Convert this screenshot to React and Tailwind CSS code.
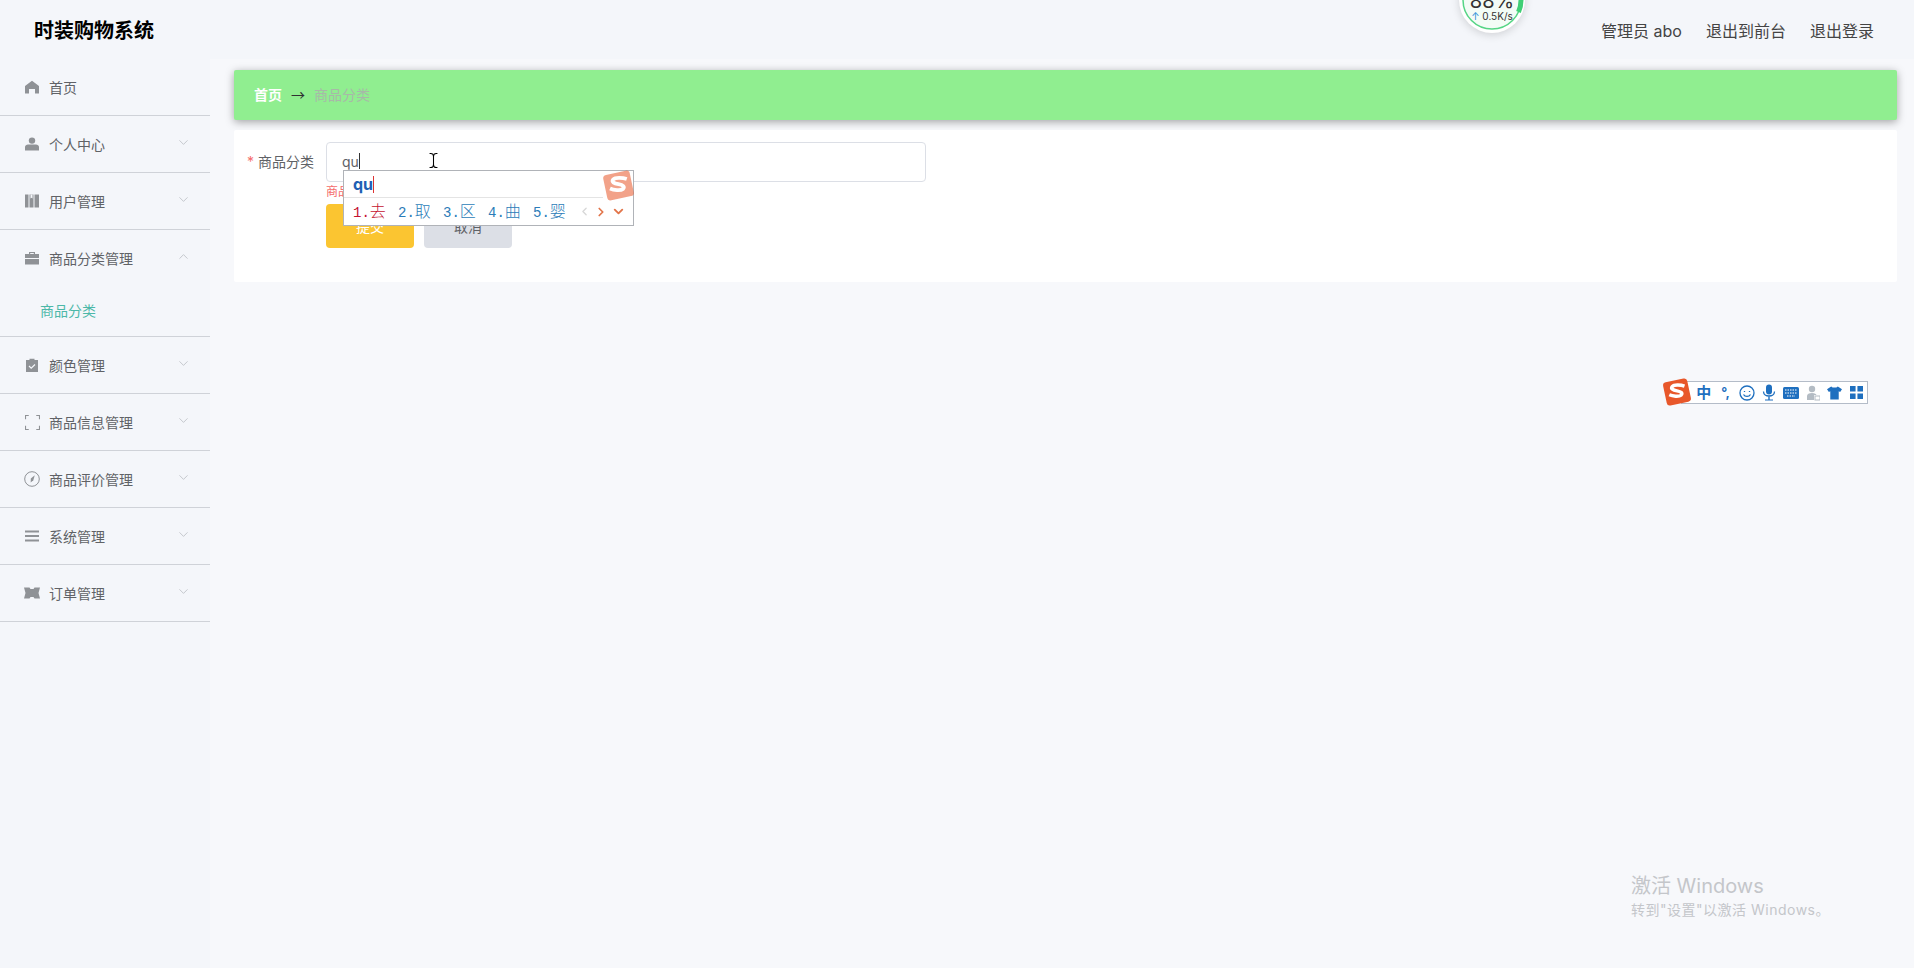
import { ChevronDown, ChevronUp, ChevronLeft, ChevronRight, TextCursor } from "lucide-react";

const font = "font-['Inter','Noto_Sans_CJK_SC',sans-serif]";

const HomeIcon = () => (
    <svg viewBox="0 0 14 14" className="w-[14px] h-[14px]" fill="#8f9296">
        <path d="M7 .8 14 6v7.500h-4V9H4v4.500H0V6z" />
    </svg>
);
const UserIcon = () => (
    <svg viewBox="0 0 14 14" className="w-[14px] h-[14px]" fill="#8f9296">
        <circle cx="7" cy="3.600" r="3.200" />
        <path d="M0 13.500V10c0-1.500 1.500-2.500 3-2.500h8c1.500 0 3 1 3 2.500v3.500z" />
    </svg>
);
const BookIcon = () => (
    <svg viewBox="0 0 14 14" className="w-[14px] h-[14px]" fill="#8f9296">
        <path d="M0 .5h3.500v13H0zM4.500 .5h4v13h-4zM9.500 .5h4.500v13H9.500z" />
        <path d="M5.500 .5h2v4l-1-.8-1 .8z" fill="#f5f7fb" />
    </svg>
);
const CaseIcon = () => (
    <svg viewBox="0 0 14 14" className="w-[14px] h-[14px]" fill="#8f9296">
        <path d="M4 3V1h6v2h4v4H0V3zm1.200 0h3.600V2.100H5.200z" />
        <path d="M0 8h14v5.500H0z" />
    </svg>
);
const ClipIcon = () => (
    <svg viewBox="0 0 14 14" className="w-[14px] h-[14px]">
        <path d="M1 2h3.500V.8h5V2H13v12H1z" fill="#8f9296" />
        <path d="m4 8 2.200 2.200L10 6.500" fill="none" stroke="#f5f7fb" strokeWidth="1.200" />
    </svg>
);
const ScanIcon = () => (
    <svg viewBox="0 0 14 14" className="w-[15px] h-[15px]" fill="none" stroke="#8f9296" strokeWidth="1">
        <path d="M.5 4V.5h3M10.500 .5h3V4M.5 10v3.500h3M10.500 13.500h3V10" />
    </svg>
);
const CompassIcon = () => (
    <svg viewBox="0 0 16 16" className="w-[16px] h-[16px]">
        <circle cx="8" cy="8" r="7.300" fill="none" stroke="#8f9296" strokeWidth="1" />
        <path d="M10.800 4.200 9.300 9.300 6.700 11.500 6.800 7.500z" fill="#8f9296" />
    </svg>
);
const MenuIcon = () => (
    <svg viewBox="0 0 14 12" className="w-[14px] h-[12px]" fill="#8f9296">
        <path d="M0 .5h14v2H0zM0 5h14v2H0zM0 9.500h14v2H0z" />
    </svg>
);
const TicketIcon = () => (
    <svg viewBox="0 0 16 12" className="w-[16px] h-[12px]" fill="#8f9296">
        <path d="M0 .5h5.500l1 1.500h3l1-1.500H16l-1.500 5.500 1.500 5.500h-5.500l-1-1.500h-3l-1 1.500H0l1.500-5.500z" />
    </svg>
);

const SogouLogo = ({ className }) => (
    <svg viewBox="0 0 28 28" className={className}>
        <rect x="2.500" y="3" width="23" height="22" rx="3" fill="#e8572a" transform="rotate(-12 14 14)" />
        <path d="M21 8.500c-3-1-9.500-1.800-11.500.4-1.500 2 .5 3.300 4.500 4 4 .7 5.500 2.200 3.800 4.100-2 1.600-7.800 1-11-.4" fill="none" stroke="#fff" strokeWidth="3.200" />
    </svg>
);

const menu = [
    { label: "首页", icon: <HomeIcon /> },
    { label: "个人中心", icon: <UserIcon />, arrow: true },
    { label: "用户管理", icon: <BookIcon />, arrow: true },
    { label: "商品分类管理", icon: <CaseIcon />, arrow: true, open: true, sub: "商品分类" },
    { label: "颜色管理", icon: <ClipIcon />, arrow: true },
    { label: "商品信息管理", icon: <ScanIcon />, arrow: true },
    { label: "商品评价管理", icon: <CompassIcon />, arrow: true },
    { label: "系统管理", icon: <MenuIcon />, arrow: true },
    { label: "订单管理", icon: <TicketIcon />, arrow: true },
];

const candidates = ["去", "取", "区", "曲", "婴"];

export default function App() {
    return (
        <div className={`relative w-[1914px] h-[968px] overflow-hidden bg-[#f7f8fb] ${font}`}>
            {/* --- Header --- */}
            <header className="flex items-center justify-between h-[59px] pt-[3px] bg-[#f4f6fa] pl-[34px] pr-[40px]">
                <h1 className="text-[20px] font-bold text-black">时装购物系统</h1>
                <div className="flex gap-[24px] text-[16px] text-[#444]">
                    <span>管理员 abo</span>
                    <span>退出到前台</span>
                    <span>退出登录</span>
                </div>
            </header>

            <div className="flex">
                {/* --- Sidebar --- */}
                <aside className="w-[210px] h-[909px] shrink-0 bg-[#f4f6fa] text-[14px] text-[#606266]">
                    {menu.map((m) => (
                        <div key={m.label} className="border-b border-[#cfd2d8]">
                            <div className="flex items-center h-[56px] pl-[24px] pr-[19px]">
                                <span className="flex items-center justify-center w-[16px] mr-[9px]">{m.icon}</span>
                                <span className="flex-1">{m.label}</span>
                                {m.arrow && (m.open
                                    ? <ChevronUp size={15} strokeWidth={1} className="text-[#a8abb2] -mt-[4px]" />
                                    : <ChevronDown size={15} strokeWidth={1} className="text-[#a8abb2] -mt-[4px]" />)}
                            </div>
                            {m.sub && (
                                <div className="flex items-center h-[50px] pb-[2px] pl-[40px] text-[#4cb8a8]">{m.sub}</div>
                            )}
                        </div>
                    ))}
                </aside>

                {/* --- Main --- */}
                <main className="flex-1 pl-[24px] pr-[17px] pt-[11px]">
                    <div className="flex items-center h-[50px] pb-[2px] px-[20px] rounded-[2px] bg-[#90ee90] text-[14px] shadow-[0_2px_8px_rgba(0,0,0,0.35)]">
                        <span className="font-bold text-white">首页</span>
                        <span className="mx-[9px] text-[#303133] text-[14px] leading-none font-['Noto_Sans_CJK_SC']">→</span>
                        <span className="text-[#a8b8a8]">商品分类</span>
                    </div>

                    <div className="mt-[10px] h-[152px] bg-white rounded-[2px] pt-[12px] text-[14px]">
                        <div className="flex">
                            <label className="flex items-center justify-end w-[80px] h-[40px] pb-[2px] text-[#606266]">
                                <span className="text-[#f56c6c] mr-[4px]">*</span>商品分类
                            </label>
                            <div className="ml-[13px] w-[600px] -translate-x-[1px]">
                                <div className="flex items-center h-[40px] pb-[2px] px-[15px] border border-[#dcdfe6] rounded-[4px] text-[#606266]">
                                    qu<span className="w-px h-[16px] bg-[#333]" />
                                </div>
                                <p className="mt-[2px] text-[12px] leading-[16px] text-[#f56c6c]">商品分类不能为空</p>
                                <div className="flex gap-[10px] mt-[4px]">
                                    <button className="w-[88px] h-[44px] rounded-[4px] bg-[#fbc531] text-white">提交</button>
                                    <button className="w-[88px] h-[44px] rounded-[4px] bg-[#dcdfe6] text-[#606266]">取消</button>
                                </div>
                            </div>
                        </div>
                    </div>
                </main>
            </div>

            {/* --- Network speed ball, cut off by the top of the window --- */}
            <div className="absolute left-[1459px] -top-[33px] flex flex-col items-center justify-end w-[66px] h-[66px] pb-[11px] rounded-full bg-white shadow-[0_2px_8px_rgba(0,0,0,0.15)]">
                <svg viewBox="0 0 66 66" className="absolute inset-0 w-[66px] h-[66px]">
                    <circle cx="33" cy="33" r="29" fill="#f3fcf6" stroke="#55d585" strokeWidth="1.500" />
                    <path d="M62 33a29 29 0 0 1-2.500 12" fill="none" stroke="#3fcf75" strokeWidth="5" />
                </svg>
                <span className="relative text-[20px] leading-[20px] -mb-[1px] text-[#333]">88%</span>
                <span className="relative text-[10px] leading-[12px] text-[#333]"><span className="text-[#2f8fd8]">↑</span> 0.5K/s</span>
            </div>

            {/* --- Mouse cursor --- */}
            <TextCursor size={17} strokeWidth={1.500} className="absolute left-[425px] top-[152px] text-black" />

            {/* --- IME candidate popup --- */}
            <div className="absolute left-[343px] top-[170px] w-[291px] h-[56px] bg-white border border-[#b0b3b8]">
                <div className="flex items-center h-[27px] pl-[9px] mr-[30px] border-b border-[#e4e4e4] text-[16px] font-bold text-[#1f5fb4]">
                    qu<span className="w-px h-[17px] bg-[#d33]" />
                </div>
                <div className="flex items-center h-[27px] pl-[9px] text-[16px] font-light">
                    {candidates.map((c, i) => (
                        <span key={c} className={`w-[45px] whitespace-nowrap ${i === 0 ? "text-[#c4122f]" : "text-[#2b7cb8]"}`}>
                            <span className="font-['Liberation_Mono'] text-[14px]">{i + 1}.</span>{c}
                        </span>
                    ))}
                    <ChevronLeft size={13} strokeWidth={2.500} className="text-[#d8d8d8]" />
                    <ChevronRight size={14} strokeWidth={3} className="ml-[3px] text-[#e2754a]" />
                    <ChevronDown size={15} strokeWidth={3} className="ml-[3px] text-[#e2754a]" />
                </div>
                <SogouLogo className="absolute -right-[2px] -top-[2px] w-[33px] h-[33px] opacity-55" />
            </div>

            {/* --- IME status bar --- */}
            <div className="absolute left-[1663px] top-[381px]">
                <div className="flex items-center ml-[18px] w-[187px] h-[23px] pl-[11px] bg-white border border-[#b4bcc8] text-[#1e6fbf] *:flex *:items-center *:justify-center *:w-[22px]">
                    <span className="text-[15px] font-bold leading-none">中</span>
                    <span className="text-[13px] font-bold leading-none">°,</span>
                    <span>
                        <svg viewBox="0 0 16 16" className="w-[16px] h-[16px]" fill="none" stroke="#1e6fbf" strokeWidth="1.300">
                            <circle cx="8" cy="8" r="7" />
                            <path d="M4.500 9.500c1.500 2.500 5.500 2.500 7 0M5.500 6v1M10.500 6v1" />
                        </svg>
                    </span>
                    <span>
                        <svg viewBox="0 0 14 16" className="w-[14px] h-[17px]" fill="#1e6fbf">
                            <rect x="4" y="0" width="6" height="10" rx="3" />
                            <path d="M1.500 7c0 6 11 6 11 0" fill="none" stroke="#1e6fbf" strokeWidth="1.300" />
                            <path d="M6.300 12h1.400v3H11v1H3v-1h3.300z" />
                        </svg>
                    </span>
                    <span>
                        <svg viewBox="0 0 16 12" className="w-[16px] h-[12px]">
                            <rect width="16" height="12" rx="1.500" fill="#1e6fbf" />
                            <path d="M2 3h12M2 6h12M4 9h8" stroke="#fff" strokeWidth="1.200" strokeDasharray="1.500 1" />
                        </svg>
                    </span>
                    <span>
                        <svg viewBox="0 0 14 16" className="w-[14px] h-[16px]" fill="#b4bcc4">
                            <circle cx="6" cy="4" r="3.200" />
                            <path d="M1 15v-4c0-2 2-3 5-3s4 1 4.500 2H8v5z" />
                            <rect x="9" y="11" width="5" height="4" fill="none" stroke="#b4bcc4" />
                        </svg>
                    </span>
                    <span>
                        <svg viewBox="0 0 16 14" className="w-[15px] h-[14px]" fill="#1e6fbf">
                            <path d="M4.500 0 6 1h4l1.500-1L16 3l-2 3-1.500-.8V14h-9V5.200L2 6 0 3z" />
                        </svg>
                    </span>
                    <span>
                        <svg viewBox="0 0 14 14" className="w-[13px] h-[13px]" fill="#1e6fbf">
                            <path d="M0 0h6v6H0zM8 0h6v6H8zM0 8h6v6H0zM8 8h6v6H8z" />
                        </svg>
                    </span>
                </div>
                <SogouLogo className="absolute -left-[1px] -top-[4px] w-[30px] h-[30px]" />
            </div>

            {/* --- Windows activation watermark --- */}
            <div className="absolute left-[1631px] top-[873px] text-[#c4c6ca]">
                <p className="text-[20px] leading-[26px]">激活 Windows</p>
                <p className="text-[14px] leading-[22px] tracking-[0.5px]">转到"设置"以激活 Windows。</p>
            </div>
        </div>
    );
}
